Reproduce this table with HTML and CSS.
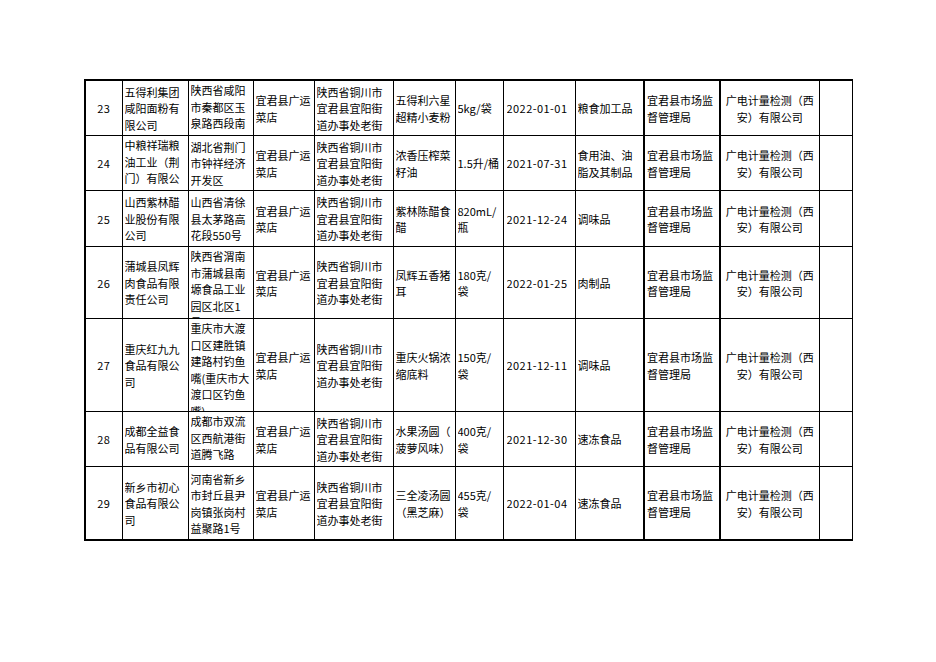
FILE: index.html
```html
<!DOCTYPE html>
<html lang="zh-CN">
<head>
<meta charset="utf-8">
<title>抽检信息</title>
<link rel="stylesheet" href="styles.css">
</head>
<body>
<div class="page">
<table class="sheet">
<colgroup>
<col class="w-no"><col class="w-co"><col class="w-addr"><col class="w-shop"><col class="w-saddr"><col class="w-prod"><col class="w-spec"><col class="w-date"><col class="w-cat"><col class="w-org"><col class="w-lab"><col class="w-rem">
</colgroup>
<tbody>
<tr class="h55">
<td class="num"><div class="c">23</div></td>
<td><div class="c">五得利集团咸阳面粉有限公司</div></td>
<td><div class="c">陕西省咸阳市秦都区玉泉路西段南侧</div></td>
<td><div class="c">宜君县广运菜店</div></td>
<td><div class="c">陕西省铜川市宜君县宜阳街道办事处老街</div></td>
<td><div class="c">五得利六星超精小麦粉</div></td>
<td><div class="c">5kg/袋</div></td>
<td class="date"><div class="c">2022-01-01</div></td>
<td><div class="c">粮食加工品</div></td>
<td class="thick"><div class="c">宜君县市场监督管理局</div></td>
<td class="thick ctr"><div class="c">广电计量检测（西安）有限公司</div></td>
<td><div class="c"></div></td>
</tr>
<tr class="h55">
<td class="num"><div class="c">24</div></td>
<td><div class="c">中粮祥瑞粮油工业（荆门）有限公司</div></td>
<td><div class="c">湖北省荆门市钟祥经济开发区</div></td>
<td><div class="c">宜君县广运菜店</div></td>
<td><div class="c">陕西省铜川市宜君县宜阳街道办事处老街</div></td>
<td><div class="c">浓香压榨菜籽油</div></td>
<td><div class="c">1.5升/桶</div></td>
<td class="date"><div class="c">2021-07-31</div></td>
<td><div class="c">食用油、油脂及其制品</div></td>
<td class="thick"><div class="c">宜君县市场监督管理局</div></td>
<td class="thick ctr"><div class="c">广电计量检测（西安）有限公司</div></td>
<td><div class="c"></div></td>
</tr>
<tr class="h56">
<td class="num"><div class="c">25</div></td>
<td><div class="c">山西紫林醋业股份有限公司</div></td>
<td><div class="c">山西省清徐县太茅路高花段550号</div></td>
<td><div class="c">宜君县广运菜店</div></td>
<td><div class="c">陕西省铜川市宜君县宜阳街道办事处老街</div></td>
<td><div class="c">紫林陈醋食醋</div></td>
<td><div class="c">820mL/瓶</div></td>
<td class="date"><div class="c">2021-12-24</div></td>
<td><div class="c">调味品</div></td>
<td class="thick"><div class="c">宜君县市场监督管理局</div></td>
<td class="thick ctr"><div class="c">广电计量检测（西安）有限公司</div></td>
<td><div class="c"></div></td>
</tr>
<tr class="h72">
<td class="num"><div class="c">26</div></td>
<td><div class="c">蒲城县凤辉肉食品有限责任公司</div></td>
<td><div class="c">陕西省渭南市蒲城县南塬食品工业园区北区1号</div></td>
<td><div class="c">宜君县广运菜店</div></td>
<td><div class="c">陕西省铜川市宜君县宜阳街道办事处老街</div></td>
<td><div class="c">凤辉五香猪耳</div></td>
<td><div class="c">180克/袋</div></td>
<td class="date"><div class="c">2022-01-25</div></td>
<td><div class="c">肉制品</div></td>
<td class="thick"><div class="c">宜君县市场监督管理局</div></td>
<td class="thick ctr"><div class="c">广电计量检测（西安）有限公司</div></td>
<td><div class="c"></div></td>
</tr>
<tr class="h93">
<td class="num"><div class="c">27</div></td>
<td><div class="c">重庆红九九食品有限公司</div></td>
<td><div class="c">重庆市大渡口区建胜镇建路村钓鱼嘴(重庆市大渡口区钓鱼嘴)</div></td>
<td><div class="c">宜君县广运菜店</div></td>
<td><div class="c">陕西省铜川市宜君县宜阳街道办事处老街</div></td>
<td><div class="c">重庆火锅浓缩底料</div></td>
<td><div class="c">150克/袋</div></td>
<td class="date"><div class="c">2021-12-11</div></td>
<td><div class="c">调味品</div></td>
<td class="thick"><div class="c">宜君县市场监督管理局</div></td>
<td class="thick ctr"><div class="c">广电计量检测（西安）有限公司</div></td>
<td><div class="c"></div></td>
</tr>
<tr class="h55">
<td class="num"><div class="c">28</div></td>
<td><div class="c">成都全益食品有限公司</div></td>
<td><div class="c">成都市双流区西航港街道腾飞路369号</div></td>
<td><div class="c">宜君县广运菜店</div></td>
<td><div class="c">陕西省铜川市宜君县宜阳街道办事处老街</div></td>
<td><div class="c">水果汤圆（&#8203;菠萝风味）</div></td>
<td><div class="c">400克/袋</div></td>
<td class="date"><div class="c">2021-12-30</div></td>
<td><div class="c">速冻食品</div></td>
<td class="thick"><div class="c">宜君县市场监督管理局</div></td>
<td class="thick ctr"><div class="c">广电计量检测（西安）有限公司</div></td>
<td><div class="c"></div></td>
</tr>
<tr class="h73">
<td class="num"><div class="c">29</div></td>
<td><div class="c">新乡市初心食品有限公司</div></td>
<td><div class="c">河南省新乡市封丘县尹岗镇张岗村益聚路1号</div></td>
<td><div class="c">宜君县广运菜店</div></td>
<td><div class="c">陕西省铜川市宜君县宜阳街道办事处老街</div></td>
<td><div class="c">三全凌汤圆（黑芝麻）</div></td>
<td><div class="c">455克/袋</div></td>
<td class="date"><div class="c">2022-01-04</div></td>
<td><div class="c">速冻食品</div></td>
<td class="thick"><div class="c">宜君县市场监督管理局</div></td>
<td class="thick ctr"><div class="c">广电计量检测（西安）有限公司</div></td>
<td><div class="c"></div></td>
</tr>
</tbody>
</table>
</div>
</body>
</html>
```
FILE: styles.css
```css
html, body {
  margin: 0;
  padding: 0;
  background: #ffffff;
}

.page {
  padding: 79px 0 0 84px;
  font-family: "Noto Sans CJK SC", "Noto Sans", sans-serif;
  font-size: 11px;
  line-height: 16.5px;
  color: #000000;
}

.sheet {
  border-collapse: collapse;
  table-layout: fixed;
  width: 767px;
  border-top: 2px solid #000;
  border-bottom: 2px solid #000;
  border-left: 2px solid #000;
  border-right: 1px solid #000;
}

.w-no { width: 37px; }
.w-co { width: 66px; }
.w-addr { width: 65px; }
.w-shop { width: 61px; }
.w-saddr { width: 79px; }
.w-prod { width: 62px; }
.w-spec { width: 48px; }
.w-date { width: 72px; }
.w-cat { width: 69px; }
.w-org { width: 76px; }
.w-lab { width: 99px; }
.w-rem { width: 33px; }

.sheet td {
  border: 1px solid #000;
  padding: 0 2px;
  vertical-align: top;
  text-align: left;
}

.sheet td.thick {
  border-left: 2px solid #000;
}

.sheet td.num,
.sheet td.ctr {
  text-align: center;
}

.sheet td.num {
  letter-spacing: 0.3px;
}

.sheet td.date {
  padding-left: 3px;
  letter-spacing: 0.45px;
}

.c {
  box-sizing: border-box;
  display: flex;
  flex-direction: column;
  overflow: hidden;
  padding-top: 1px;
}

.c::before,
.c::after {
  content: "";
  flex: 1 1 0;
  min-height: 0;
}

.h55 .c { height: 54px; }
.h56 .c { height: 55px; }
.h72 .c { height: 71px; }
.h93 .c { height: 92px; }
.h73 .c { height: 72px; }
```
